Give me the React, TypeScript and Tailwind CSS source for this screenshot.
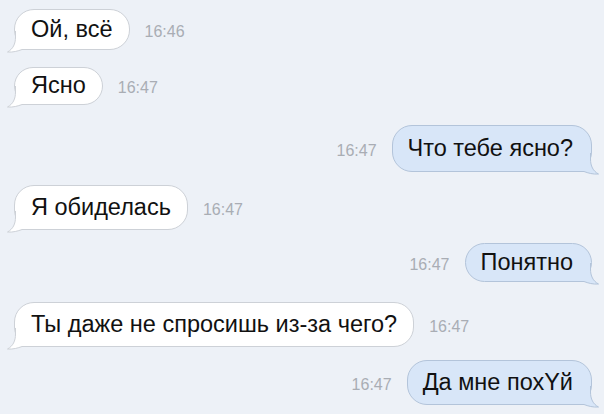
import React from "react";

type Msg = {
  text: string;
  time: string;
  out: boolean;
  gap: string; // top margin
  h: string; // bubble height
};

const MESSAGES: Msg[] = [
  { text: "Ой, всё", time: "16:46", out: false, gap: "mt-[9px]", h: "h-[41px]" },
  { text: "Ясно", time: "16:47", out: false, gap: "mt-[17px]", h: "h-[38px]" },
  { text: "Что тебе ясно?", time: "16:47", out: true, gap: "mt-[20px]", h: "h-[47px]" },
  { text: "Я обиделась", time: "16:47", out: false, gap: "mt-[13px]", h: "h-[45px]" },
  { text: "Понятно", time: "16:47", out: true, gap: "mt-[13px]", h: "h-[39px]" },
  { text: "Ты даже не спросишь из-за чего?", time: "16:47", out: false, gap: "mt-[20px]", h: "h-[45px]" },
  { text: "Да мне похYй", time: "16:47", out: true, gap: "mt-[13px]", h: "h-[45px]" },
];

function Tail({ out }: { out: boolean }) {
  const fill = out ? "#d8e6f8" : "#ffffff";
  const stroke = out ? "#b3c4da" : "#cdd1d7";
  return (
    <svg
      width="28"
      height="22"
      viewBox="0 0 28 22"
      className={
        out
          ? "absolute right-[-8px] bottom-[-4px] -scale-x-100"
          : "absolute left-[-8px] bottom-[-4px]"
      }
    >
      <path
        d="M8.5 0 V6 C8.5 13 6 18 0.5 21 C6 21.5 11 20 15 18.5 H28 V0 Z"
        fill={fill}
      />
      <path
        d="M8.5 0 V6 C8.5 13 6 18 0.5 21 C6 21.5 11 20 15 18.5 H28"
        fill="none"
        stroke={stroke}
        strokeWidth="1"
      />
    </svg>
  );
}

function Bubble({ msg }: { msg: Msg }) {
  const time = (
    <span className="text-[16px] leading-none text-[#a9adb4]">{msg.time}</span>
  );
  return (
    <div
      className={`flex items-baseline gap-[15px] ${msg.gap} ${
        msg.out ? "justify-end pr-[12px]" : "justify-start pl-[14px]"
      }`}
    >
      {msg.out && time}
      <div
        className={`relative flex items-center rounded-[20px] border ${msg.h} ${
          msg.out
            ? "border-[#b3c4da] bg-[#d8e6f8] pl-[15px] pr-[18px]"
            : "border-[#cdd1d7] bg-white pl-[16px] pr-[16px]"
        }`}
      >
        <Tail out={msg.out} />
        <span className="relative text-[23.5px] leading-none text-[#111111]">
          {msg.text}
        </span>
      </div>
      {!msg.out && time}
    </div>
  );
}

export default function App() {
  return (
    <div className="h-[414px] w-[604px] overflow-hidden bg-[#edf1f7] font-['Liberation_Sans',Arial,sans-serif]">
      {MESSAGES.map((m, i) => (
        <Bubble key={i} msg={m} />
      ))}
    </div>
  );
}
